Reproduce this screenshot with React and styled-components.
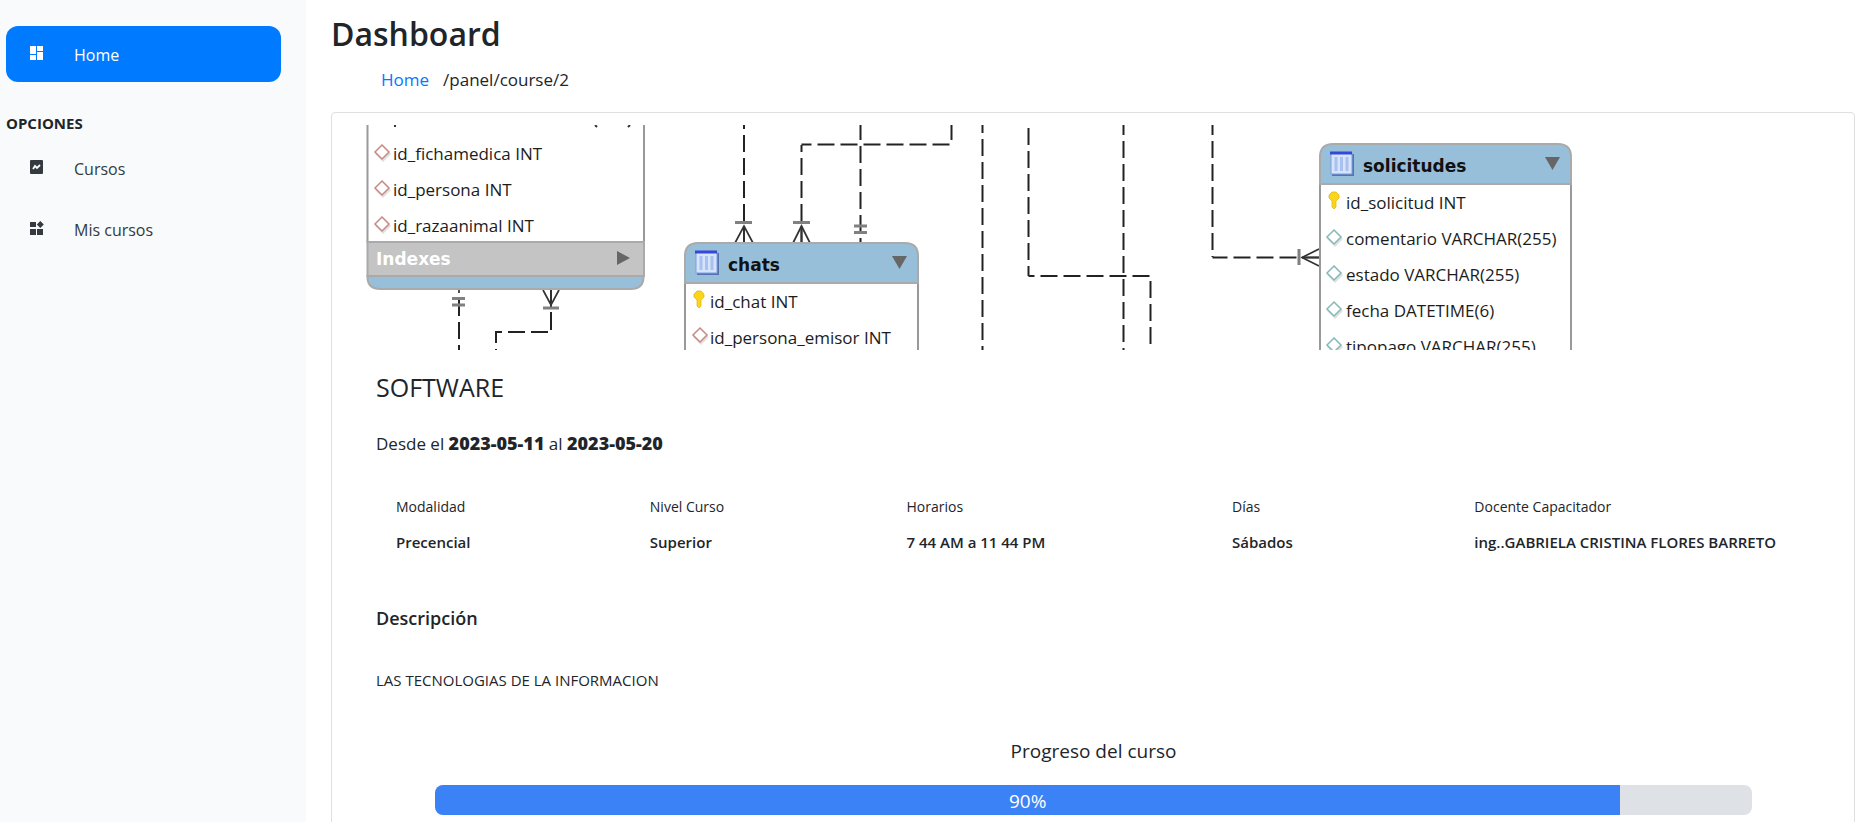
import React from "react";
import styled, { createGlobalStyle } from "styled-components";

const GlobalStyle = createGlobalStyle`
  *, *::before, *::after { box-sizing: border-box; }
  body {
    margin: 0;
    background: #fff;
    color: #212529;
    font-family: "Open Sans", "Noto Sans", sans-serif;
    font-size: 16px;
    line-height: 24px;
  }
  h1, h2, h3, p, ul, ol { margin: 0; padding: 0; }
  ul, ol { list-style: none; }
`;

const Layout = styled.div`
  display: flex;
  height: 100vh;
`;

const Sidebar = styled.nav`
  flex: 0 0 306px;
  padding: 26px 25px 26px 6px;
  background: #f8fafc;
`;

const NavLink = styled.a`
  display: flex;
  align-items: center;
  gap: 28px;
  height: ${(p) => (p.$active ? 56 : 61)}px;
  padding: 2px 0 0 22px;
  border-radius: 12px;
  background: ${(p) => (p.$active ? "#007bff" : "transparent")};
  color: ${(p) => (p.$active ? "#fff" : "#343a40")};
  text-decoration: none;
  svg { flex: none; margin-bottom: 2px; }
`;

const SectionTitle = styled.h2`
  margin-top: 29px;
  padding-bottom: 2px;
  font-size: 15px;
  line-height: 24px;
  font-weight: 700;
`;

const Main = styled.main`
  flex: 1;
  min-width: 0;
  padding: 14px 0 0 25px;
  overflow-y: auto;
  scrollbar-width: none;
`;

const PageTitle = styled.h1`
  font-size: 32px;
  line-height: 40px;
  font-weight: 600;
`;

const Breadcrumb = styled.ol`
  display: flex;
  gap: 14px;
  padding: 14px 0 20px 50px;
  font-size: 17px;
  a { color: #007bff; text-decoration: none; }
`;

const Card = styled.section`
  padding: 12px;
  border: 1px solid #dfdfdf;
  border-radius: 4px;
`;

const Cover = styled.svg`
  display: block;
  width: 100%;
  height: 225px;
`;

const CardBody = styled.div`
  padding: 23px 32px 40px;
`;

const CourseTitle = styled.h2`
  font-size: 25px;
  line-height: 28px;
  font-weight: 400;
`;

const Dates = styled.p`
  margin-top: 30px;
  font-size: 17px;
  strong { font-size: 18px; font-weight: 800; }
`;

const Details = styled.table`
  width: 100%;
  margin-top: 33px;
  border-collapse: collapse;
  table-layout: fixed;
  text-align: left;
  th, td { padding: 0 0 0 20px; height: 35px; white-space: nowrap; }
  th { font-size: 14px; font-weight: 400; }
  td { font-size: 15px; font-weight: 600; }
`;

const Column = styled.col`
  width: ${(p) => p.$share}%;
`;

const Subtitle = styled.h3`
  margin-top: 47px;
  font-size: 18px;
  font-weight: 600;
`;

const Description = styled.p`
  margin-top: 38px;
  font-size: 15px;
`;

const Progress = styled.div`
  margin: 47px 58px 0 59px;
`;

const ProgressTitle = styled.h3`
  text-align: center;
  font-size: 19px;
  font-weight: 400;
`;

const Track = styled.div`
  height: 30px;
  margin-top: 22px;
  overflow: hidden;
  border-radius: 8px;
  background: #dee2e6;
`;

const Fill = styled.div`
  height: 100%;
  background: #3b82f6;
  color: #fff;
  text-align: center;
  font-size: 19px;
  line-height: 32px;
`;

function DashboardIcon() {
  return (
    <svg width="18" height="18" viewBox="0 0 18 18" fill="currentColor" aria-hidden="true">
      <path d="M2 1h6v8H2zM9 1h6v5H9zM2 10h6v5H2zM9 7h6v8H9z" />
    </svg>
  );
}

function ChartIcon() {
  return (
    <svg width="18" height="18" viewBox="0 0 18 18" aria-hidden="true">
      <rect x="2" y="1" width="13" height="14" rx="1" fill="currentColor" />
      <path d="M5 10l2-3 2 2 3-3" fill="none" stroke="#f8fafc" strokeWidth="1.8" />
    </svg>
  );
}

function WidgetIcon() {
  return (
    <svg width="18" height="18" viewBox="0 0 18 18" fill="currentColor" aria-hidden="true">
      <path d="M2 2h6v5H2zM2 9h6v6H2zM9 9h6v6H9zM12.300 1l3.500 3.500-3.500 3.500-3.500-3.500z" />
    </svg>
  );
}

const DiagramText = styled.text`
  font-family: "Open Sans", "Noto Sans", sans-serif;
  font-size: 17px;
  fill: #1c1c1c;
`;

const DiagramTitle = styled.text`
  font-family: "DejaVu Sans", sans-serif;
  font-size: 17px;
  font-weight: 700;
  fill: ${(p) => p.$fill || "#111"};
`;

function Diamond({ x, y, color }) {
  return (
    <>
      <path d={`M${x + 1} ${y - 6}l8 8-8 8-8-8z`} fill="#ccc" opacity="0.6" />
      <path d={`M${x} ${y - 7}l7 7-7 7-7-7z`} fill="#fff" stroke={color} strokeWidth="1.5" />
    </>
  );
}

function KeyIcon({ x, y }) {
  return (
    <path
      d={`M${x} ${y}h4l3 3v3l-3 3v6l-2 2-2-2v-6l-3-3v-3z`}
      fill="#fbd51c"
      stroke="#e0b400"
      strokeWidth="0.7"
    />
  );
}

function TableHeader({ x, y, width, name }) {
  return (
    <>
      <path
        d={`M${x} ${y + 40}v-27q0-13 13-13h${width - 26}q13 0 13 13v27z`}
        fill="#98bfda"
        stroke="#aaa"
        strokeWidth="2"
      />
      <rect x={x + 12} y={y + 10} width="22" height="22" fill="#5573ad" />
      <rect x={x + 11} y={y + 9} width="21" height="21" fill="#d5e4fb" stroke="#7f9de0" />
      <path d={`M${x + 10} ${y + 9}h22`} stroke="#3348d8" strokeWidth="3" />
      <path d={`M${x + 16} ${y + 13}v14m5.500-14v14m5.500-14v14`} stroke="#a8c1ee" strokeWidth="3" />
      <DiagramTitle x={x + 43} y={y + 28}>{name}</DiagramTitle>
      <path d={`M${x + width - 26} ${y + 13}h15l-7.500 13z`} fill="#666" />
    </>
  );
}

function SchemaDiagram() {
  const red = "#c98880";
  const teal = "#84b9b9";
  return (
    <Cover viewBox="0 0 1498 225" preserveAspectRatio="xMinYMid slice" role="img" aria-label="Diagrama de base de datos">
      <g fill="none" stroke="#222" strokeWidth="2" strokeDasharray="17 6">
        <path d="M115 174v51" />
        <path d="M207 165v42" strokeDasharray="18 4" />
        <path d="M207 207h-55v18" strokeDashoffset="-3" />
        <path d="M400-13V118" />
        <path d="M457.500 20v98" strokeDashoffset="10" />
        <path d="M457.500 19.500h149" strokeDashoffset="7" />
        <path d="M607.500 0v15" />
        <path d="M516.500-2v120" />
        <path d="M638.500-9v234" />
        <path d="M684.500 3v148" />
        <path d="M684.500 151h122v74" strokeDashoffset="11" />
        <path d="M779.500-7v232" />
        <path d="M868.500-7v139" />
        <path d="M868.500 132.500h107" strokeDashoffset="2" />
      </g>
      <g fill="none" stroke="#333" strokeWidth="1.700">
        <path d="M199 165l8 15 8-15M391 118l9-17 9 17M449 118l8.500-17 8.500 17M975 124l-17 8.500 17 8.500" />
        <path d="M115 165v3M207 165v16M400 101v17M457.500 101v17M958 132.500h17" />
      </g>
      <g fill="none" stroke="#808080" strokeWidth="3">
        <path d="M108 173.500h13M108 180h13M199 183h16M391 97.500h17M449 97.500h17M510 101h13M510 107.500h13M955 124v16" />
      </g>

      <path d="M23.500 0v118M300 0v118" stroke="#999" strokeWidth="2" />
      <path d="M51 0v2M251 0l2 2M286 0l-2 2" stroke="#333" strokeWidth="2" />
      <Diamond x={38} y={27} color={red} />
      <Diamond x={38} y={63} color={red} />
      <Diamond x={38} y={99} color={red} />
      <DiagramText x="49" y="35">id_fichamedica INT</DiagramText>
      <DiagramText x="49" y="71">id_persona INT</DiagramText>
      <DiagramText x="49" y="107">id_razaanimal INT</DiagramText>
      <path d="M23.500 151v1q0 12 13 12h250q13 0 13-12v-1z" fill="#98bfda" stroke="#aaa" strokeWidth="2" />
      <path d="M23.500 117h276.500v34h-276.500z" fill="#c4c4c4" stroke="#aaa" strokeWidth="2" />
      <DiagramTitle x="32" y="140" $fill="#fff">Indexes</DiagramTitle>
      <path d="M273 126v14l13-7z" fill="#666" />

      <path d="M341 158v67M574 158v67" stroke="#999" strokeWidth="2" />
      <TableHeader x={341} y={118} width={233} name="chats" />
      <KeyIcon x={353} y={166} />
      <DiagramText x="366" y="183">id_chat INT</DiagramText>
      <Diamond x={356} y={210} color={red} />
      <DiagramText x="366" y="219">id_persona_emisor INT</DiagramText>

      <path d="M976 59v166M1227 59v166" stroke="#999" strokeWidth="2" />
      <TableHeader x={976} y={19} width={251} name="solicitudes" />
      <KeyIcon x={988} y={67} />
      <DiagramText x="1002" y="84">id_solicitud INT</DiagramText>
      <Diamond x={990} y={112} color={teal} />
      <DiagramText x="1002" y="120">comentario VARCHAR(255)</DiagramText>
      <Diamond x={990} y={148} color={teal} />
      <DiagramText x="1002" y="156">estado VARCHAR(255)</DiagramText>
      <Diamond x={990} y={184} color={teal} />
      <DiagramText x="1002" y="192">fecha DATETIME(6)</DiagramText>
      <Diamond x={990} y={220} color={teal} />
      <DiagramText x="1002" y="228">tipopago VARCHAR(255)</DiagramText>
    </Cover>
  );
}

const details = [
  { label: "Modalidad", value: "Precencial", share: 17.7 },
  { label: "Nivel Curso", value: "Superior", share: 17.9 },
  { label: "Horarios", value: "7 44 AM a 11 44 PM", share: 22.7 },
  { label: "Días", value: "Sábados", share: 16.9 },
  { label: "Docente Capacitador", value: "ing..GABRIELA CRISTINA FLORES BARRETO", share: 24.8 },
];

export default function App() {
  const progress = 90;
  return (
    <>
      <GlobalStyle />
      <Layout>
        <Sidebar>
          <NavLink href="#home" $active><DashboardIcon />Home</NavLink>
          <SectionTitle>OPCIONES</SectionTitle>
          <ul>
            <li><NavLink href="#cursos"><ChartIcon />Cursos</NavLink></li>
            <li><NavLink href="#mis-cursos"><WidgetIcon />Mis cursos</NavLink></li>
          </ul>
        </Sidebar>
        <Main>
          <PageTitle>Dashboard</PageTitle>
          <Breadcrumb>
            <li><a href="#home">Home</a></li>
            <li>/panel/course/2</li>
          </Breadcrumb>
          <Card>
            <SchemaDiagram />
            <CardBody>
              <CourseTitle>SOFTWARE</CourseTitle>
              <Dates>Desde el <strong>2023-05-11</strong> al <strong>2023-05-20</strong></Dates>
              <Details>
                <colgroup>
                  {details.map((d) => <Column key={d.label} $share={d.share} />)}
                </colgroup>
                <thead>
                  <tr>{details.map((d) => <th key={d.label} scope="col">{d.label}</th>)}</tr>
                </thead>
                <tbody>
                  <tr>{details.map((d) => <td key={d.label}>{d.value}</td>)}</tr>
                </tbody>
              </Details>
              <Subtitle>Descripción</Subtitle>
              <Description>LAS TECNOLOGIAS DE LA INFORMACION</Description>
              <Progress>
                <ProgressTitle id="progress-title">Progreso del curso</ProgressTitle>
                <Track role="progressbar" aria-labelledby="progress-title" aria-valuenow={progress} aria-valuemin={0} aria-valuemax={100}>
                  <Fill style={{ width: `${progress}%` }}>{progress}%</Fill>
                </Track>
              </Progress>
            </CardBody>
          </Card>
        </Main>
      </Layout>
    </>
  );
}
